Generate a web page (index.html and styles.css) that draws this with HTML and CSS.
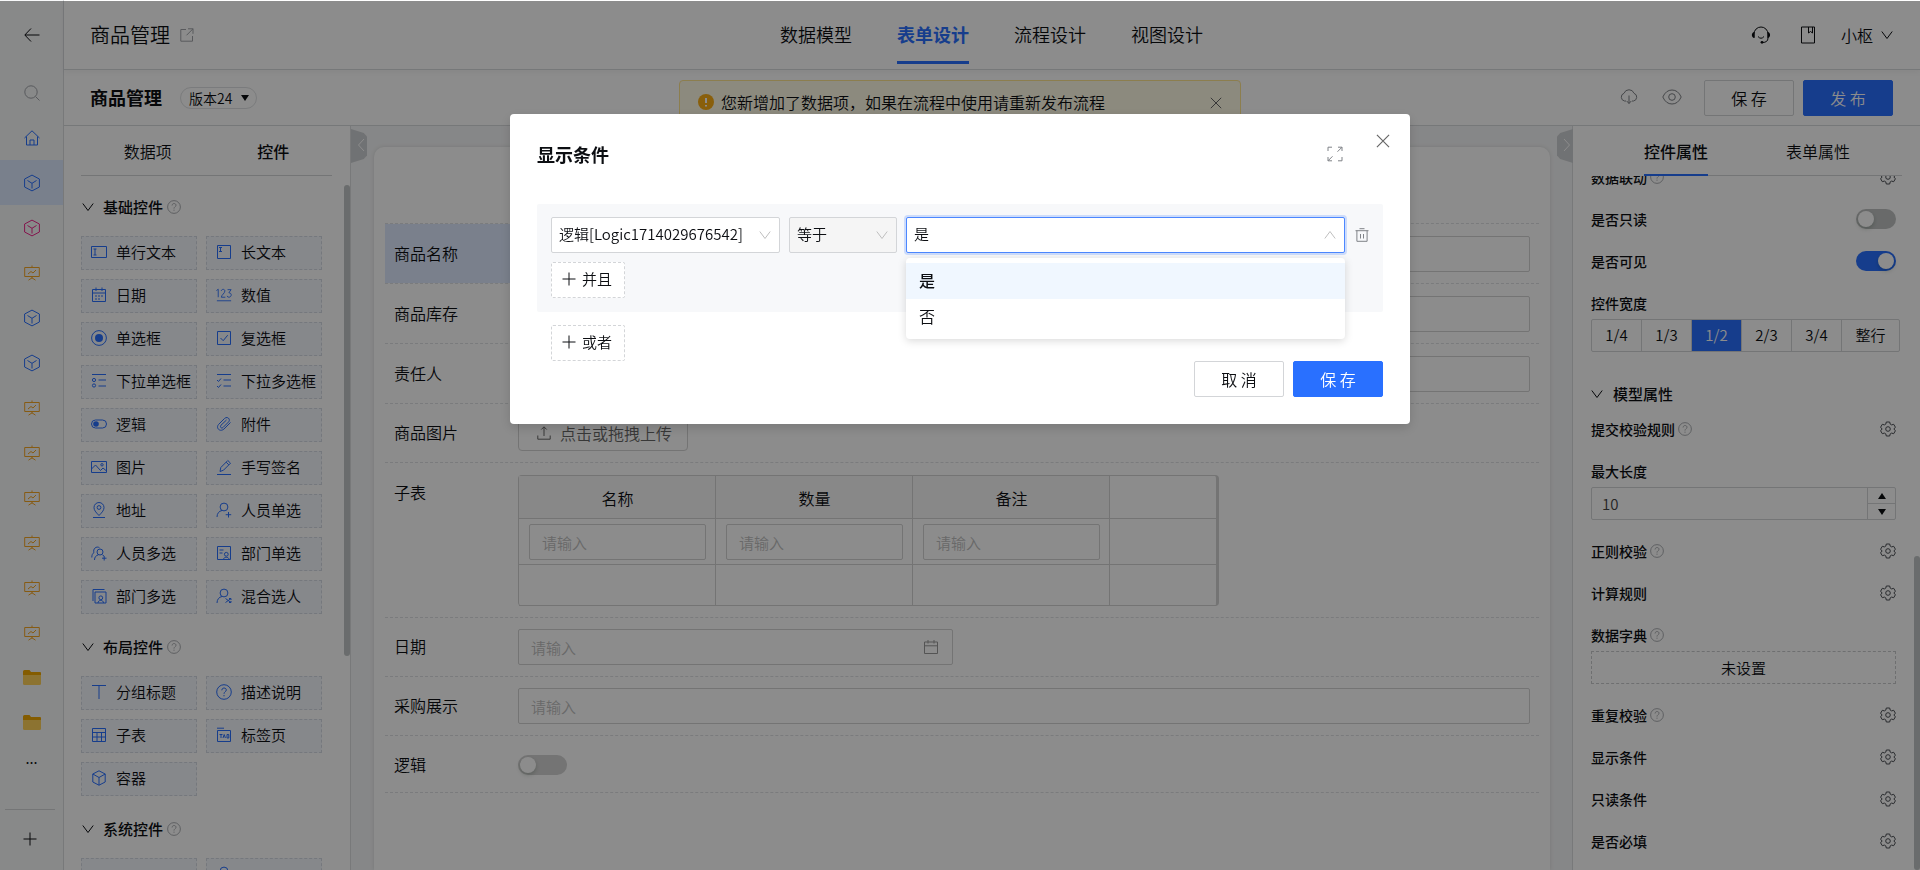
FILE: index.html
```html
<!DOCTYPE html>
<html lang="zh-CN">
<head>
    <meta charset="UTF-8">
    <meta name="viewport" content="width=device-width, initial-scale=1.0">
    <title>商品管理 - 表单设计</title>
    <link rel="stylesheet" href="styles.css">
</head>
<body>
    <!-- Icons -->
    <svg class="sprite" aria-hidden="true">
        <symbol id="i-back" viewBox="0 0 16 16"><path d="M15.5 8H1M7 1.5 0.8 8 7 14.5"/></symbol>
        <symbol id="i-search" viewBox="0 0 16 16"><circle cx="7" cy="7" r="6.2"/><path d="M11.6 11.6 15.5 15.5"/></symbol>
        <symbol id="i-home" viewBox="0 0 16 16"><path d="M.5 8 8 .8 15.500 8M2.500 6.500v8.500h11V6.500M6 15v-5h4v5"/></symbol>
        <symbol id="i-cube" viewBox="0 0 16 17"><path d="M8 .6 15.400 4.500v8L8 16.400.6 12.500v-8zM3.500 6 8 8.800 12.500 6M8 8.800V14"/></symbol>
        <symbol id="i-board" viewBox="0 0 16 16"><path d="M.7 2.500h14.600v9H.7zM8 .5v2M8 11.500v2M4.500 15.200 8 12.800l3.500 2.400M4 9l3-2.500 2 1.500 3-3"/></symbol>
        <symbol id="i-folder" viewBox="0 0 18 15"><path class="folder-back" d="M0 1.500A1.500 1.500 0 0 1 1.500 0H6.500l1.500 2h9a1 1 0 0 1 1 1v4H0z"/><path class="folder-front" d="M0 5h18v8.500a1.500 1.500 0 0 1-1.500 1.500h-15A1.500 1.500 0 0 1 0 13.500z"/></symbol>
        <symbol id="i-plus" viewBox="0 0 14 14"><path d="M7 .5v13M.5 7h13"/></symbol>
        <symbol id="i-link" viewBox="0 0 14 14"><path d="M6 1.500H.8v11.700h11.700V8M8 .8h5v5M13 .8 6.500 7.300"/></symbol>
        <symbol id="i-down" viewBox="0 0 12 12"><path d="M.8 2.500 6 9.500 11.200 2.500"/></symbol>
        <symbol id="i-up" viewBox="0 0 12 12"><path d="M.8 9.500 6 2.500 11.200 9.500"/></symbol>
        <symbol id="i-left" viewBox="0 0 8 14"><path d="M7 1 1.500 7 7 13"/></symbol>
        <symbol id="i-right" viewBox="0 0 8 14"><path d="M1 1 6.500 7 1 13"/></symbol>
        <symbol id="i-caret" viewBox="0 0 8 6"><path class="solid" d="M0 0h8L4 6z"/></symbol>
        <symbol id="i-caret-up" viewBox="0 0 8 6"><path class="solid" d="M0 6h8L4 0z"/></symbol>
        <symbol id="i-headset" viewBox="0 0 20 18"><path d="M3 11.500V8a7 7 0 0 1 14 0v4c0 3-2 4.500-5.500 4.500M7 10.500q3 3.500 6 0"/><path class="solid" d="M3.500 6v6C0 12 0 6 3.500 6zM16.500 6v6c3.500 0 3.500-6 0-6z"/><circle class="solid" cx="11" cy="16.300" r="1.400"/></symbol>
        <symbol id="i-book" viewBox="0 0 16 18"><path d="M1.500 1h13v16h-13zM8.500 1v6l2-1.500 2 1.500V1"/></symbol>
        <symbol id="i-cloud" viewBox="0 0 18 15"><path d="M6 11.500H4.500A4 4 0 0 1 4 3.800a5.300 5.300 0 0 1 10 0 4 4 0 0 1-.5 7.700H12M9 6v8M6.700 11.500 9 14l2.300-2.500"/></symbol>
        <symbol id="i-eye" viewBox="0 0 20 16"><path d="M.8 8Q4 1 10 1t9.200 7Q16 15 10 15T.8 8z"/><circle cx="10" cy="8" r="3.300"/></symbol>
        <symbol id="i-help" viewBox="0 0 16 16"><circle cx="8" cy="8" r="7.300"/><path d="M5.800 6.300C5.800 3.200 10.300 3.400 10.300 6c0 1.700-2.300 1.800-2.300 3.800M8 11v1.300"/></symbol>
        <symbol id="i-text" viewBox="0 0 16 16"><path d="M.5 2.500h15v11H.5zM2.500 5h3M4 5v6M2.500 11h3"/></symbol>
        <symbol id="i-longtext" viewBox="0 0 16 16"><path d="M1.500 1.500h13v13h-13zM3 3.500h3M4.500 3.500v4M3 7.500h3"/></symbol>
        <symbol id="i-date" viewBox="0 0 16 16"><path d="M1.500 2.500h13v12h-13zM1.500 6h13M5 .5v3.500M11 .5v3.500M4 9h2M7 9h2M10 9h2M4 12h2M7 12h2"/></symbol>
        <symbol id="i-number" viewBox="0 0 18 16"><path d="M.5 3 2.500 1.500v9M6 3.500C6 1 10 1 10 3.500 10 6 6 8 6 10.500h4.500M13 2h4l-2.500 3.500c4 .3 3 5 0 5-1 0-1.800-.5-2-1.500M1 14.500h16"/></symbol>
        <symbol id="i-radio" viewBox="0 0 16 16"><circle cx="8" cy="8" r="7.400"/><circle class="solid" cx="8" cy="8" r="4"/></symbol>
        <symbol id="i-check" viewBox="0 0 16 16"><path d="M1.500 1.500h13v13h-13zM4.500 8l2.700 2.700 4.500-5.500"/></symbol>
        <symbol id="i-radiolist" viewBox="0 0 16 16"><path d="M1 1.500h14M7.500 7h7.500M7.500 13h7.500"/><circle cx="3" cy="7" r="1.600"/><circle cx="3" cy="12.500" r="1.600"/></symbol>
        <symbol id="i-checklist" viewBox="0 0 16 16"><path d="M1 1.500h14M7.500 7h7.500M7.500 13h7.500M1 7l1.500 1.500L5 5.500M1 13l1.500 1.500L5 11.500"/></symbol>
        <symbol id="i-switch" viewBox="0 0 16 16"><rect x=".5" y="4" width="15" height="8" rx="4"/><circle class="solid" cx="5" cy="8" r="2.800"/></symbol>
        <symbol id="i-clip" viewBox="0 0 16 16"><path d="M14.500 6.500 8 13c-4 3.500-8.500-1-5.500-4.500l6-6c3-2.800 6.500 1 4 3.500L7 11.500c-1.600 1.400-3.500-.5-2-2.300L10.500 4"/></symbol>
        <symbol id="i-image" viewBox="0 0 16 16"><path d="M.5 2.500h15v11H.5zM.5 10l4-4 5 5.500 2.500-2.500 3.500 3"/><circle cx="11" cy="5.800" r="1.200"/></symbol>
        <symbol id="i-pen" viewBox="0 0 16 16"><path d="M1 15.500h14M4 12.500l.8-4 7-7 2.700 2.700-7 7zM10.200 3.200l2.600 2.600"/></symbol>
        <symbol id="i-pin" viewBox="0 0 16 16"><path d="M8 13.500C4.500 10 3 8 3 5.500a5 5 0 0 1 10 0C13 8 11.500 10 8 13.500zM2 15.500h12"/><circle cx="8" cy="5.500" r="1.900"/></symbol>
        <symbol id="i-person" viewBox="0 0 16 16"><circle cx="8" cy="5" r="3.900"/><path d="M1 15c0-3.500 2-6 5-6.500M12.500 10v5.500M9.700 12.700h5.500"/></symbol>
        <symbol id="i-people" viewBox="0 0 16 16"><circle cx="9" cy="7" r="3"/><path d="M3.500 15c0-3 1.500-4.500 4-5.200M3 7.500C1.500 4 5.500.5 8.500 2.800M.8 12.500c0-2.500.7-4 2.200-5M11.500 10l1.500 1M13.200 11v4.500M11 13.200h4.500"/></symbol>
        <symbol id="i-dept" viewBox="0 0 16 16"><path d="M1.500 1.500h13v13h-13zM3.500 5h4M3.500 8h3M7.500 14.500c0-3 5.500-3 5.500 0"/><circle cx="10.300" cy="9.300" r="1.900"/></symbol>
        <symbol id="i-depts" viewBox="0 0 16 16"><path d="M4 4h11v11H4zM2 13V1.500h11.500M7 15c0-3.500 5.500-3.500 5.500 0"/><circle cx="9.800" cy="9.800" r="1.900"/></symbol>
        <symbol id="i-mix" viewBox="0 0 16 16"><circle cx="8" cy="5" r="3.900"/><path d="M1 15c0-3.500 2-6 5-6.500M9.500 10.500l5.500 4M9.500 14.500l5.500-4M13 10.500h2v1.500M13 14.500h2V13"/></symbol>
        <symbol id="i-title" viewBox="0 0 16 16"><path d="M1 1.500h14M8 1.500V15"/></symbol>
        <symbol id="i-table" viewBox="0 0 16 16"><path d="M1.500 1.500h13v13h-13zM1.500 5.500h13M1.500 10h13M6 5.500v9M10.500 5.500v9"/></symbol>
        <symbol id="i-tab" viewBox="0 0 16 16"><path d="M1.500 3.500h13v11h-13zM1 1.200h7M3.500 7.500h3M5 7.500v3.500M7 11l1.200-3.500L9.400 11M11 7.500v3.500h1.800V7.500z"/></symbol>
        <symbol id="i-box" viewBox="0 0 16 16"><path d="M8 .8 14.200 4v8L8 15.200 1.800 12V4zM1.800 4 8 7.500 14.200 4M8 7.500v7.700"/></symbol>
        <symbol id="i-gear" viewBox="0 0 16 16"><path d="M6.300 1h3.400l.5 2.100 1.400.8 2.100-.6 1.700 2.900L13.900 8l1.500 1.800-1.700 2.900-2.100-.6-1.400.8-.5 2.100H6.300l-.5-2.100-1.400-.8-2.100.6L.6 9.800 2.100 8 .6 6.200l1.700-2.900 2.100.6 1.400-.8z"/><circle cx="8" cy="8" r="2.300"/></symbol>
        <symbol id="i-upload" viewBox="0 0 14 14"><path d="M.8 9.500v3.700h12.400V9.500M7 10V1M4.300 3.500 7 .8l2.700 2.700"/></symbol>
        <symbol id="i-calendar" viewBox="0 0 16 16"><path d="M1.500 3h13v11.500h-13zM1.500 6.800h13M5 1v3.500M11 1v3.500"/></symbol>
        <symbol id="i-warn" viewBox="0 0 16 16"><circle class="solid" cx="8" cy="8" r="8"/><path class="mark" d="M8 4v5M8 11v1.500"/></symbol>
        <symbol id="i-close" viewBox="0 0 12 12"><path d="M.8.8l10.400 10.400M11.200.8.8 11.200"/></symbol>
        <symbol id="i-full" viewBox="0 0 16 16"><path d="M1 5V1.200h4M11 1.200h4V5M15 1.200 10.500 5.700M1 11v3.800h4M1 14.800l4.500-4.500M15 11v3.800h-4"/></symbol>
        <symbol id="i-trash" viewBox="0 0 14 14"><path d="M4.500.7h5M.5 2.700h13M1.900 2.700v10.600h10.200V2.700M5.500 6v4.500M8.500 6v4.500"/></symbol>
    </svg>

    <!-- Sidebar -->
    <aside class="sidebar">
        <button class="side-back" aria-label="返回"><svg class="icon"><use href="#i-back"/></svg></button>
        <button class="side-item gray" aria-label="搜索"><svg class="icon"><use href="#i-search"/></svg></button>
        <nav class="side-nav">
            <a href="#" class="side-item blue"><svg class="icon"><use href="#i-home"/></svg></a>
            <a href="#" class="side-item blue active"><svg class="icon tall"><use href="#i-cube"/></svg></a>
            <a href="#" class="side-item pink"><svg class="icon tall"><use href="#i-cube"/></svg></a>
            <a href="#" class="side-item orange"><svg class="icon"><use href="#i-board"/></svg></a>
            <a href="#" class="side-item blue"><svg class="icon tall"><use href="#i-cube"/></svg></a>
            <a href="#" class="side-item blue"><svg class="icon tall"><use href="#i-cube"/></svg></a>
            <a href="#" class="side-item orange"><svg class="icon"><use href="#i-board"/></svg></a>
            <a href="#" class="side-item orange"><svg class="icon"><use href="#i-board"/></svg></a>
            <a href="#" class="side-item orange"><svg class="icon"><use href="#i-board"/></svg></a>
            <a href="#" class="side-item orange"><svg class="icon"><use href="#i-board"/></svg></a>
            <a href="#" class="side-item orange"><svg class="icon"><use href="#i-board"/></svg></a>
            <a href="#" class="side-item orange"><svg class="icon"><use href="#i-board"/></svg></a>
            <a href="#" class="side-item"><svg class="icon folder"><use href="#i-folder"/></svg></a>
            <a href="#" class="side-item"><svg class="icon folder"><use href="#i-folder"/></svg></a>
            <a href="#" class="side-more">...</a>
        </nav>
        <button class="side-add" aria-label="新增"><svg class="icon small"><use href="#i-plus"/></svg></button>
    </aside>

    <div class="main">
        <!-- Header -->
        <header class="header">
            <div class="app-name">商品管理 <svg class="icon small gray"><use href="#i-link"/></svg></div>
            <nav class="header-nav">
                <a href="#">数据模型</a>
                <a href="#" class="active">表单设计</a>
                <a href="#">流程设计</a>
                <a href="#">视图设计</a>
            </nav>
            <div class="header-right">
                <button class="icon-btn" aria-label="客服"><svg class="icon wide"><use href="#i-headset"/></svg></button>
                <button class="icon-btn" aria-label="文档"><svg class="icon large"><use href="#i-book"/></svg></button>
                <button class="user">小枢 <svg class="icon tiny"><use href="#i-down"/></svg></button>
            </div>
        </header>

        <!-- Toolbar -->
        <div class="toolbar">
            <h1>商品管理</h1>
            <div class="version">
                <select aria-label="版本"><option>版本24</option></select>
                <svg class="icon caret"><use href="#i-caret"/></svg>
            </div>
            <div class="toolbar-right">
                <button class="icon-btn muted" aria-label="下载"><svg class="icon large"><use href="#i-cloud"/></svg></button>
                <button class="icon-btn muted" aria-label="预览"><svg class="icon wide"><use href="#i-eye"/></svg></button>
                <button class="btn">保 存</button>
                <button class="btn primary">发 布</button>
            </div>
        </div>

        <div class="content">
            <!-- Widgets -->
            <section class="widgets">
                <div class="widget-tabs">
                    <a href="#">数据项</a>
                    <a href="#" class="active">控件</a>
                </div>
                <div class="widget-list">
                    <h2><svg class="icon tiny"><use href="#i-down"/></svg>基础控件<svg class="icon small gray"><use href="#i-help"/></svg></h2>
                    <div class="widget-grid">
                        <button><svg class="icon"><use href="#i-text"/></svg>单行文本</button>
                        <button><svg class="icon"><use href="#i-longtext"/></svg>长文本</button>
                        <button><svg class="icon"><use href="#i-date"/></svg>日期</button>
                        <button><svg class="icon"><use href="#i-number"/></svg>数值</button>
                        <button><svg class="icon"><use href="#i-radio"/></svg>单选框</button>
                        <button><svg class="icon"><use href="#i-check"/></svg>复选框</button>
                        <button><svg class="icon"><use href="#i-radiolist"/></svg>下拉单选框</button>
                        <button><svg class="icon"><use href="#i-checklist"/></svg>下拉多选框</button>
                        <button><svg class="icon"><use href="#i-switch"/></svg>逻辑</button>
                        <button><svg class="icon"><use href="#i-clip"/></svg>附件</button>
                        <button><svg class="icon"><use href="#i-image"/></svg>图片</button>
                        <button><svg class="icon"><use href="#i-pen"/></svg>手写签名</button>
                        <button><svg class="icon"><use href="#i-pin"/></svg>地址</button>
                        <button><svg class="icon"><use href="#i-person"/></svg>人员单选</button>
                        <button><svg class="icon"><use href="#i-people"/></svg>人员多选</button>
                        <button><svg class="icon"><use href="#i-dept"/></svg>部门单选</button>
                        <button><svg class="icon"><use href="#i-depts"/></svg>部门多选</button>
                        <button><svg class="icon"><use href="#i-mix"/></svg>混合选人</button>
                    </div>
                    <h2><svg class="icon tiny"><use href="#i-down"/></svg>布局控件<svg class="icon small gray"><use href="#i-help"/></svg></h2>
                    <div class="widget-grid">
                        <button><svg class="icon"><use href="#i-title"/></svg>分组标题</button>
                        <button><svg class="icon"><use href="#i-help"/></svg>描述说明</button>
                        <button><svg class="icon"><use href="#i-table"/></svg>子表</button>
                        <button><svg class="icon"><use href="#i-tab"/></svg>标签页</button>
                        <button><svg class="icon"><use href="#i-box"/></svg>容器</button>
                    </div>
                    <h2><svg class="icon tiny"><use href="#i-down"/></svg>系统控件<svg class="icon small gray"><use href="#i-help"/></svg></h2>
                    <div class="widget-grid">
                        <button></button>
                        <button><svg class="icon"><use href="#i-person"/></svg></button>
                    </div>
                </div>
                <div class="scrollbar left-bar"></div>
                <button class="handle handle-left" aria-label="收起"><svg class="icon arrow"><use href="#i-left"/></svg></button>
            </section>

            <!-- Form canvas -->
            <section class="canvas">
                <div class="form-card">
                    <div class="form-row split">
                        <div class="cell selected">
                            <label for="f-name">商品名称</label>
                            <input id="f-name" class="input" type="text">
                        </div>
                        <div class="cell">
                            <input class="input" type="text" aria-label="商品">
                        </div>
                    </div>
                    <div class="form-row">
                        <label for="f-stock">商品库存</label>
                        <input id="f-stock" class="input" type="text">
                    </div>
                    <div class="form-row">
                        <label for="f-owner">责任人</label>
                        <input id="f-owner" class="input" type="text">
                    </div>
                    <div class="form-row slim">
                        <label for="f-upload">商品图片</label>
                        <button id="f-upload" class="upload"><svg class="icon small"><use href="#i-upload"/></svg>点击或拖拽上传</button>
                    </div>
                    <div class="form-row">
                        <label>子表</label>
                        <table class="sub-table">
                            <tr><th>名称</th><th>数量</th><th>备注</th><td class="last"></td></tr>
                            <tr>
                                <td><input class="input" type="text" placeholder="请输入" aria-label="名称"></td>
                                <td><input class="input" type="text" placeholder="请输入" aria-label="数量"></td>
                                <td><input class="input" type="text" placeholder="请输入" aria-label="备注"></td>
                                <td class="last"></td>
                            </tr>
                            <tr class="empty"><td></td><td></td><td></td><td class="last"></td></tr>
                        </table>
                    </div>
                    <div class="form-row slim">
                        <label for="f-date">日期</label>
                        <div class="date">
                            <input id="f-date" class="input" type="text" placeholder="请输入">
                            <svg class="icon"><use href="#i-calendar"/></svg>
                        </div>
                    </div>
                    <div class="form-row slim">
                        <label for="f-buy">采购展示</label>
                        <input id="f-buy" class="input" type="text" placeholder="请输入">
                    </div>
                    <div class="form-row slim">
                        <label for="f-logic">逻辑</label>
                        <input id="f-logic" class="switch long" type="checkbox">
                    </div>
                </div>
            </section>

            <!-- Properties -->
            <section class="props">
                <div class="prop-tabs">
                    <a href="#" class="active">控件属性</a>
                    <a href="#">表单属性</a>
                </div>
                <div class="prop-list">
                    <div class="prop-row first">数据联动<svg class="icon small gray"><use href="#i-help"/></svg><button class="gear" aria-label="数据联动"><svg class="icon"><use href="#i-gear"/></svg></button></div>
                    <div class="prop-row"><label for="p-readonly">是否只读</label><input id="p-readonly" class="switch" type="checkbox"></div>
                    <div class="prop-row"><label for="p-visible">是否可见</label><input id="p-visible" class="switch" type="checkbox" checked></div>
                    <div class="prop-label">控件宽度</div>
                    <div class="segments">
                        <label><input type="radio" name="w">1/4</label>
                        <label><input type="radio" name="w">1/3</label>
                        <label><input type="radio" name="w" checked>1/2</label>
                        <label><input type="radio" name="w">2/3</label>
                        <label><input type="radio" name="w">3/4</label>
                        <label><input type="radio" name="w">整行</label>
                    </div>
                    <h2><svg class="icon tiny"><use href="#i-down"/></svg>模型属性</h2>
                    <div class="prop-row">提交校验规则<svg class="icon small gray"><use href="#i-help"/></svg><button class="gear" aria-label="提交校验规则"><svg class="icon"><use href="#i-gear"/></svg></button></div>
                    <label class="prop-label" for="p-max">最大长度</label>
                    <div class="number">
                        <input id="p-max" type="text" value="10">
                        <div class="steps">
                            <button aria-label="增加"><svg class="icon step"><use href="#i-caret-up"/></svg></button>
                            <button aria-label="减少"><svg class="icon step"><use href="#i-caret"/></svg></button>
                        </div>
                    </div>
                    <div class="prop-row">正则校验<svg class="icon small gray"><use href="#i-help"/></svg><button class="gear" aria-label="正则校验"><svg class="icon"><use href="#i-gear"/></svg></button></div>
                    <div class="prop-row">计算规则<button class="gear" aria-label="计算规则"><svg class="icon"><use href="#i-gear"/></svg></button></div>
                    <div class="prop-label">数据字典<svg class="icon small gray"><use href="#i-help"/></svg></div>
                    <button class="unset">未设置</button>
                    <div class="prop-row">重复校验<svg class="icon small gray"><use href="#i-help"/></svg><button class="gear" aria-label="重复校验"><svg class="icon"><use href="#i-gear"/></svg></button></div>
                    <div class="prop-row">显示条件<button class="gear" aria-label="显示条件"><svg class="icon"><use href="#i-gear"/></svg></button></div>
                    <div class="prop-row">只读条件<button class="gear" aria-label="只读条件"><svg class="icon"><use href="#i-gear"/></svg></button></div>
                    <div class="prop-row">是否必填<button class="gear" aria-label="是否必填"><svg class="icon"><use href="#i-gear"/></svg></button></div>
                </div>
                <div class="scrollbar right-bar"></div>
                <button class="handle handle-right" aria-label="收起"><svg class="icon arrow"><use href="#i-right"/></svg></button>
            </section>
        </div>
    </div>

    <!-- Notice -->
    <div class="notice">
        <svg class="icon warn"><use href="#i-warn"/></svg>
        <span>您新增加了数据项，如果在流程中使用请重新发布流程</span>
        <button class="notice-close" aria-label="关闭"><svg class="icon tiny"><use href="#i-close"/></svg></button>
    </div>

    <!-- Modal -->
    <div class="mask">
        <div class="modal" role="dialog" aria-labelledby="modal-title">
            <div class="modal-head">
                <h2 id="modal-title">显示条件</h2>
                <button class="icon-btn muted" aria-label="全屏"><svg class="icon"><use href="#i-full"/></svg></button>
                <button class="icon-btn modal-close" aria-label="关闭"><svg class="icon small"><use href="#i-close"/></svg></button>
            </div>
            <div class="conditions">
                <div class="condition">
                    <div class="select field">
                        <select aria-label="字段"><option>逻辑[Logic1714029676542]</option></select>
                        <svg class="icon tiny"><use href="#i-down"/></svg>
                    </div>
                    <div class="select operator">
                        <select aria-label="运算符"><option>等于</option></select>
                        <svg class="icon tiny"><use href="#i-down"/></svg>
                    </div>
                    <div class="select value">
                        <select aria-label="值"><option>是</option><option>否</option></select>
                        <svg class="icon tiny"><use href="#i-up"/></svg>
                        <ul class="options">
                            <li class="chosen">是</li>
                            <li>否</li>
                        </ul>
                    </div>
                    <button class="icon-btn muted" aria-label="删除"><svg class="icon small"><use href="#i-trash"/></svg></button>
                </div>
                <button class="add"><svg class="icon small"><use href="#i-plus"/></svg>并且</button>
            </div>
            <button class="add or"><svg class="icon small"><use href="#i-plus"/></svg>或者</button>
            <div class="modal-foot">
                <button class="btn">取 消</button>
                <button class="btn primary">保 存</button>
            </div>
        </div>
    </div>
</body>
</html>
```
FILE: styles.css
```css
* {
    box-sizing: border-box;
}

body {
    margin: 0;
    height: 100vh;
    display: flex;
    overflow: hidden;
    font-family: "Noto Sans CJK SC", sans-serif;
    font-size: 15px;
    font-weight: 350;
    line-height: 20px;
    color: #0c0e12;
    background: #fff;
}

h1, h2 {
    margin: 0;
}

a {
    color: inherit;
    text-decoration: none;
}

button, input, select {
    font: inherit;
    color: inherit;
    margin: 0;
    padding: 0;
    border: none;
    background: none;
    outline: none;
}

button {
    cursor: pointer;
}

/* Icons */
.sprite {
    position: absolute;
    width: 0;
    height: 0;
}

.icon {
    width: 16px;
    height: 16px;
    flex: none;
    fill: none;
    stroke: currentColor;
    stroke-width: 1;
}

.icon.small { width: 14px; height: 14px; }
.icon.tiny { width: 12px; height: 12px; }
.icon.tall { height: 18px; }
.icon.large { width: 18px; height: 18px; }
.icon.wide { width: 20px; height: 18px; }
.icon.folder { width: 18px; height: 15px; }
.icon.caret { width: 8px; height: 6px; }
.icon.step { width: 10px; height: 6px; }
.icon.arrow { width: 8px; height: 14px; }

.solid { fill: currentColor; stroke: none; }
.mark { stroke: #fff; stroke-width: 2; }
.folder-back { fill: #f0a800; stroke: none; }
.folder-front { fill: #ffd159; stroke: none; }

.gray { color: #a0a3a8; }
.blue { color: #2970ff; }
.pink { color: #f0258c; }
.orange { color: #f5a623; }

/* Sidebar */
.sidebar {
    width: 64px;
    flex: none;
    display: flex;
    flex-direction: column;
    align-items: center;
    background: #f8f9fa;
    border-right: 1px solid #dadcdf;
}

.side-back {
    height: 70px;
    display: flex;
    align-items: center;
}

.side-item {
    width: 100%;
    height: 45px;
    display: flex;
    align-items: center;
    justify-content: center;
}

.side-nav {
    width: 100%;
    flex: 1;
}

.side-item.active {
    background: #dde9ff;
}

.side-more {
    display: block;
    text-align: center;
    line-height: 26px;
}

.side-add {
    width: 50px;
    height: 61px;
    border-top: 1px solid #d3d5d8;
    margin-right: 4px;
}

/* Header */
.main {
    flex: 1;
    min-width: 0;
    display: flex;
    flex-direction: column;
}

.header {
    height: 70px;
    flex: none;
    display: grid;
    grid-template-columns: 1fr auto 1fr;
    align-items: center;
    padding: 0 27px 0 26px;
    border-bottom: 1px solid #d8dadd;
    box-shadow: 0 2px 6px rgba(0, 0, 0, 0.05);
}

.app-name {
    font-size: 20px;
    display: flex;
    align-items: center;
    gap: 10px;
}

.header-nav {
    display: flex;
    gap: 45px;
    font-size: 18px;
}

.header-nav a {
    height: 58px;
    line-height: 56px;
    border-bottom: 3px solid transparent;
}

.header-nav .active {
    color: #2970ff;
    font-weight: 700;
    border-color: #2970ff;
}

.header-right {
    display: flex;
    align-items: center;
    justify-content: flex-end;
    gap: 24px;
    font-size: 16px;
}

.icon-btn {
    display: flex;
    align-items: center;
    padding: 0 2px;
}

.header-right .icon-btn {
    padding: 0 0 0 4px;
}

.muted {
    color: #7f8287;
}

.user {
    display: flex;
    align-items: center;
    gap: 8px;
}

/* Toolbar */
.toolbar {
    height: 56px;
    flex: none;
    display: flex;
    align-items: center;
    padding: 0 27px 0 26px;
    border-bottom: 1px solid #d8dadd;
}

.toolbar h1 {
    font-size: 18px;
    font-weight: 700;
    padding-bottom: 2px;
}

.version {
    position: relative;
    margin-left: 18px;
}

.version select {
    appearance: none;
    display: block;
    height: 22px;
    width: 77px;
    padding: 0 8px;
    font-size: 14px;
    line-height: 20px;
    border: 1px solid #dfe1e3;
    border-radius: 11px;
}

.version .icon {
    position: absolute;
    right: 8px;
    top: 8px;
}

.toolbar-right {
    margin-left: auto;
    display: flex;
    align-items: center;
}

.toolbar-right .icon-btn {
    margin-right: 20px;
    padding-bottom: 2px;
}

.btn {
    width: 90px;
    height: 36px;
    font-size: 16px;
    border: 1px solid #d3d5d8;
    border-radius: 2px;
    background: #fff;
}

.btn.primary {
    color: #fff;
    background: #2970ff;
    border-color: #2970ff;
}

.toolbar-right .primary {
    margin-left: 9px;
}

.content {
    flex: 1;
    min-height: 0;
    display: flex;
}

/* Widgets */
.widgets {
    position: relative;
    width: 287px;
    flex: none;
    padding-left: 17px;
    border-right: 1px solid #dadcdf;
    display: flex;
    flex-direction: column;
}

.widget-tabs {
    display: flex;
    margin-right: 18px;
    border-bottom: 1px solid #d3d5d8;
    font-size: 16px;
    line-height: 51px;
    height: 50px;
    flex: none;
}

.widget-tabs a {
    flex: 1;
    text-align: center;
    padding-left: 8px;
}

.widget-tabs .active,
.prop-tabs .active {
    font-weight: 500;
}

.widget-list {
    flex: 1;
    overflow: hidden;
    padding-top: 21px;
}

.widget-list h2,
.prop-list h2 {
    display: flex;
    align-items: center;
    font-size: 15px;
    font-weight: 500;
    line-height: 20px;
}

.widget-list h2 .tiny {
    margin: 0 9px 0 1px;
}

.widget-list h2 .small {
    margin-left: 4px;
}

.widget-grid {
    display: grid;
    grid-template-columns: 116px 116px;
    gap: 9px;
    margin: 19px 0 23px;
}

.widget-grid button {
    height: 34px;
    display: flex;
    align-items: center;
    gap: 9px;
    padding: 0 0 2px 9px;
    white-space: nowrap;
    background: #f4f7fe;
    border: 1px dashed #d6dae3;
}

.widget-grid .icon {
    color: #2970ff;
}

.scrollbar {
    position: absolute;
    right: 0;
    width: 6px;
    border-radius: 3px;
    background: #c2c5c6;
}

.left-bar {
    top: 59px;
    height: 471px;
}

.right-bar {
    top: 430px;
    bottom: 0;
}

.handle {
    position: absolute;
    top: 3px;
    width: 16px;
    height: 34px;
    padding-left: 3px;
    color: #fff;
    background: #cdd0d3;
    z-index: 1;
}

.handle-left {
    right: -17px;
    clip-path: polygon(0 0, 80% 12%, 100% 22%, 100% 78%, 80% 88%, 0 100%);
}

.handle-right {
    left: -16px;
    clip-path: polygon(100% 0, 20% 12%, 0 22%, 0 78%, 20% 88%, 100% 100%);
}

/* Form canvas */
.canvas {
    flex: 1;
    min-width: 0;
    padding: 21px 22px 0 23px;
    background: #f5f6f7;
    display: flex;
}

.form-card {
    flex: 1;
    padding: 76px 11px 0;
    background: #fff;
    border-radius: 10px 10px 0 0;
    box-shadow: 0 0 4px rgba(0, 0, 0, 0.12);
}

.form-row {
    display: flex;
    align-items: flex-start;
    padding: 12px 9px 11px;
    border-bottom: 1px dashed #dfe1e3;
    font-size: 16px;
}

.form-row.slim {
    padding: 11px 9px;
}

.form-row.split {
    padding: 0;
    border-top: 1px dashed #dfe1e3;
}

.cell {
    flex: 1;
    display: flex;
    padding: 12px 9px 11px;
}

.cell.selected {
    background: #dfeaff;
}

.form-row label {
    width: 124px;
    flex: none;
    line-height: 34px;
}

.input {
    flex: 1;
    width: 100%;
    height: 36px;
    padding: 0 12px;
    font-size: 15px;
    border: 1px solid #d3d3d3;
    border-radius: 2px;
}

.input::placeholder {
    color: #bfbfbf;
}

.upload {
    height: 36px;
    display: flex;
    align-items: center;
    gap: 9px;
    padding: 0 15px 0 18px;
    color: #666;
    border: 1px solid #d3d3d3;
    border-radius: 4px;
}

.sub-table {
    border-spacing: 0;
    border: 1px solid #d3d3d3;
    border-width: 1px 3px 0 1px;
    border-radius: 4px;
}

.sub-table th,
.sub-table td {
    width: 197px;
    height: 43px;
    padding: 5px 9px 4px 10px;
    border-right: 1px solid #d3d3d3;
    border-bottom: 1px solid #d3d3d3;
    font-weight: 350;
}

.sub-table th {
    background: #f7f7f7;
}

.sub-table .last {
    width: 106px;
    border-right: none;
}

.sub-table .empty td {
    height: 41px;
}

.sub-table .input {
    display: block;
}

.date {
    position: relative;
    width: calc((100% - 124px) * 0.43);
}

.date .icon {
    position: absolute;
    right: 14px;
    top: 10px;
    color: #999;
}

.switch {
    appearance: none;
    width: 40px;
    height: 20px;
    padding: 2px;
    border-radius: 10px;
    background: #bfc2c2;
}

.switch::before {
    content: "";
    display: block;
    width: 16px;
    height: 16px;
    border-radius: 50%;
    background: #fff;
    box-shadow: 0 2px 4px rgba(0, 35, 11, 0.2);
}

.switch:checked {
    background: #2970ff;
}

.switch:checked::before {
    margin-left: auto;
}

.switch.long {
    width: 49px;
    margin-top: 8px;
    background: #d3d3d3;
}

/* Properties */
.props {
    position: relative;
    width: 348px;
    flex: none;
    display: flex;
    flex-direction: column;
    border-left: 1px solid #dadcdf;
}

.prop-tabs {
    display: flex;
    gap: 78px;
    height: 50px;
    flex: none;
    margin: 0 18px 0 71px;
    border-bottom: 1px solid #d3d5d8;
    font-size: 16px;
    line-height: 50px;
}

.prop-tabs .active {
    height: 50px;
    border-bottom: 2px solid #2970ff;
}

.prop-list {
    flex: 1;
    overflow: hidden;
    padding: 0 24px 0 18px;
    font-size: 14px;
    font-weight: 500;
}

.prop-row {
    display: flex;
    align-items: center;
    height: 42px;
}

.prop-row.first {
    margin-top: -20px;
}

.prop-row .small,
.prop-label .small {
    margin-left: 3px;
}

.prop-row .switch,
.gear {
    margin-left: auto;
}

.gear {
    display: flex;
    color: #4b4e54;
}

.prop-label {
    display: flex;
    align-items: center;
    padding: 11px 0 6px;
}

.segments {
    display: inline-flex;
    border: 1px solid #d3d5d8;
    border-radius: 2px;
    font-size: 15px;
    font-weight: 350;
}

.segments label {
    height: 31px;
    line-height: 30px;
    width: 50px;
    text-align: center;
    border-right: 1px solid #d3d5d8;
}

.segments label:last-child {
    width: 57px;
    border-right: none;
}

.segments input {
    appearance: none;
    position: absolute;
}

.segments label:has(:checked) {
    color: #fff;
    background: #2970ff;
}

.prop-list h2 {
    margin: 32px 0 4px;
}

.prop-list h2 .tiny {
    margin-right: 10px;
}

.number {
    display: flex;
    height: 33px;
    margin-bottom: 10px;
    border: 1px solid #d3d5d8;
    border-radius: 2px;
    font-size: 15px;
    font-weight: 350;
}

.number input {
    flex: 1;
    min-width: 0;
    padding-left: 10px;
    color: #444;
}

.steps {
    width: 28px;
    border-left: 1px solid #d3d5d8;
    display: flex;
    flex-direction: column;
}

.steps button {
    flex: 1;
    display: flex;
    align-items: center;
    justify-content: center;
}

.steps button + button {
    border-top: 1px solid #d3d5d8;
}

.unset {
    width: 100%;
    height: 33px;
    margin-bottom: 10px;
    font-size: 15px;
    font-weight: 350;
    border: 1px dashed #c8cacd;
}

/* Notice */
.notice {
    position: absolute;
    top: 80px;
    left: 50%;
    transform: translateX(-50%);
    width: 562px;
    height: 44px;
    display: flex;
    align-items: center;
    gap: 7px;
    padding: 0 18px;
    font-size: 16px;
    background: #fffbe6;
    border: 1px solid #ffe58f;
    border-radius: 4px;
}

.warn {
    color: #faad14;
}

.notice-close {
    margin-left: auto;
    color: #666;
}

/* Modal */
.mask {
    position: fixed;
    inset: 1px 0 0;
    background: rgba(0, 0, 0, 0.45);
    z-index: 10;
}

.modal {
    width: 900px;
    margin: 113px auto 0;
    padding: 27px;
    background: #fff;
    border-radius: 4px;
    box-shadow: 0 4px 12px rgba(0, 0, 0, 0.15);
}

.modal-head {
    display: flex;
    align-items: center;
    height: 25px;
    margin-bottom: 38px;
}

.modal-head h2 {
    flex: 1;
    font-size: 18px;
    font-weight: 700;
}

.modal-close {
    margin: 0 -9px 25px 29px;
    color: #666;
}

.conditions {
    padding: 13px 12px 14px 14px;
    background: #f7f8fa;
    border-radius: 2px;
}

.condition {
    display: flex;
    align-items: center;
    gap: 9px;
    margin-bottom: 9px;
}

.condition .icon-btn {
    padding: 0 2px 0 1px;
}

.select {
    position: relative;
}

.select select {
    appearance: none;
    display: block;
    width: 100%;
    height: 36px;
    padding: 0 7px 2px;
    line-height: 22px;
    background: #fff;
    border: 1px solid #d3d5d8;
    border-radius: 2px;
}

.select .icon {
    position: absolute;
    right: 9px;
    top: 12px;
    color: #bfbfbf;
}

.field {
    width: 229px;
}

.operator {
    width: 108px;
}

.operator select {
    background: #f5f5f5;
}

.value {
    flex: 1;
}

.value select {
    border-color: #4c87ff;
    box-shadow: 0 0 0 2px rgba(41, 112, 255, 0.2);
}

.options {
    position: absolute;
    top: 41px;
    left: 0;
    right: 0;
    margin: 0;
    padding: 5px 0 4px;
    list-style: none;
    background: #fff;
    border-radius: 4px;
    box-shadow: 0 2px 8px rgba(0, 0, 0, 0.15);
    font-size: 16px;
}

.options li {
    height: 36px;
    line-height: 34px;
    padding: 0 13px;
}

.options .chosen {
    font-weight: 500;
    background: #f0f7ff;
}

.add {
    display: flex;
    align-items: center;
    gap: 6px;
    height: 36px;
    padding: 0 12px 2px 10px;
    background: #fff;
    border: 1px dashed #d3d5d8;
    border-radius: 2px;
}

.or {
    margin: 13px 0 0 14px;
}

.modal-foot {
    display: flex;
    justify-content: flex-end;
    gap: 9px;
}
```
